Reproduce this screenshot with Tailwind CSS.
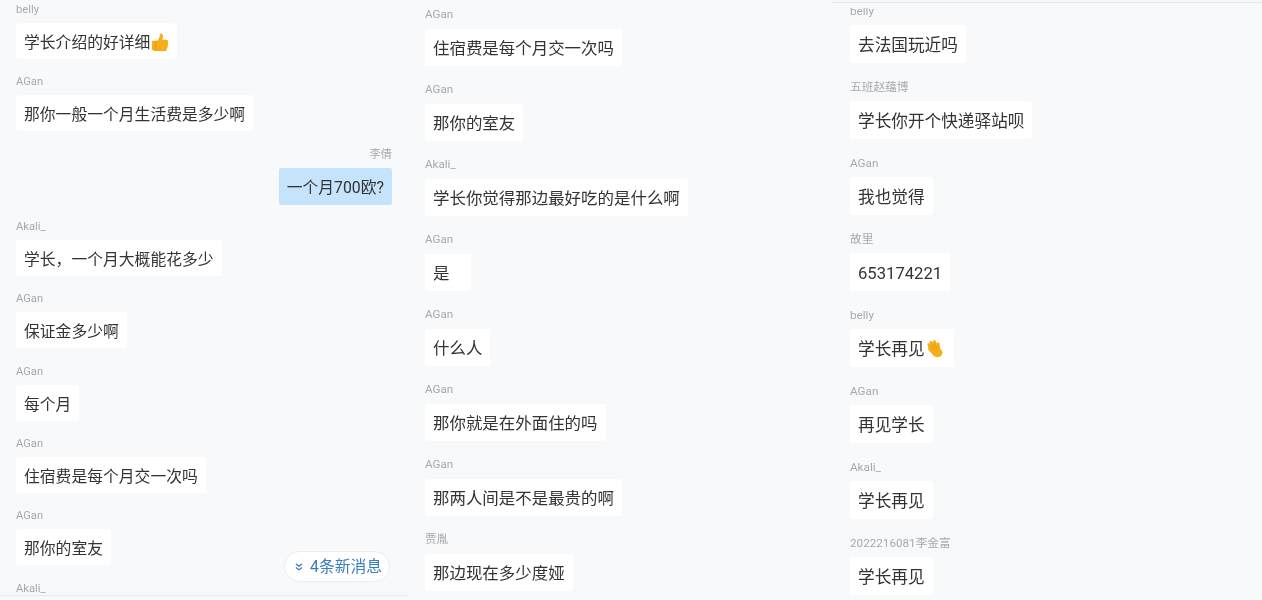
<!DOCTYPE html>
<html lang="zh-CN">
<head>
<meta charset="utf-8">
<script src="https://cdn.jsdelivr.net/npm/@tailwindcss/browser@4"></script>
</head>
<body class="m-0">
<main class="relative flex h-[600px] w-[1262px] overflow-hidden bg-[#f7f9fb] font-['Roboto','Noto_Sans_CJK_SC',sans-serif] text-[#333] antialiased blur-[0.35px]">

  <!-- Column 1 -->
  <section class="w-[408px] shrink-0">
    <div class="h-[595px] overflow-hidden">
      <div class="flex flex-col gap-[14.33px] px-4 pt-[1px] text-[15.8px] leading-[33px]">
        <div><p class="mb-[5px] h-[17px] text-[11.2px] leading-[18px] text-[#a9a9a9]">belly</p><p class="flex w-fit rounded-[2px] bg-white px-2 pt-[3px]">学长介绍的好详细<svg class="ml-[1px] mt-[6px] h-[20px] w-[18px]" viewBox="0 0 20 21"><path fill="#f5ae17" d="M1 10.500c0-.8.6-1.400 1.400-1.400H7c1.200-1.200 2.200-3 2.600-5.200.2-1.400.5-2.900 1.700-2.900 1.400 0 2.100 1.500 2.100 3.200 0 1.400-.4 2.800-1 3.900h4.700c1.100 0 1.900.9 1.900 2 0 .6-.3 1.100-.6 1.500.5.4.8 1 .8 1.600 0 .8-.4 1.400-1 1.800.2.3.3.7.3 1.100 0 .8-.5 1.500-1.100 1.800.1.3.1.5.1.8 0 1.100-.9 1.800-2 1.800H6c-2 0-5-.4-5-2.500z"/><path fill="#e39410" d="M6 10v9.500l-1 .2V9.800z"/></svg></p></div>
        <div><p class="mb-[5px] h-[17px] text-[11.2px] leading-[18px] text-[#a9a9a9]">AGan</p><p class="w-fit rounded-[2px] bg-white px-2 pt-[3px]">那你一般一个月生活费是多少啊</p></div>
        <div class="flex flex-col items-end"><p class="mb-[5px] h-[17px] text-[11.2px] leading-[18px] text-[#a9a9a9]">李倩</p><p class="w-fit rounded-[2px] bg-[#c5e3fb] px-2 pt-[3px] leading-[34px]">一个月700欧?</p></div>
        <div class="-mt-[1px]"><p class="mb-[5px] h-[17px] text-[11.2px] leading-[18px] text-[#a9a9a9]">Akali_</p><p class="w-fit rounded-[2px] bg-white px-2 pt-[3px]">学长，一个月大概能花多少</p></div>
        <div><p class="mb-[5px] h-[17px] text-[11.2px] leading-[18px] text-[#a9a9a9]">AGan</p><p class="w-fit rounded-[2px] bg-white px-2 pt-[3px]">保证金多少啊</p></div>
        <div><p class="mb-[5px] h-[17px] text-[11.2px] leading-[18px] text-[#a9a9a9]">AGan</p><p class="w-fit rounded-[2px] bg-white px-2 pt-[3px]">每个月</p></div>
        <div><p class="mb-[5px] h-[17px] text-[11.2px] leading-[18px] text-[#a9a9a9]">AGan</p><p class="w-fit rounded-[2px] bg-white px-2 pt-[3px]">住宿费是每个月交一次吗</p></div>
        <div><p class="mb-[5px] h-[17px] text-[11.2px] leading-[18px] text-[#a9a9a9]">AGan</p><p class="w-fit rounded-[2px] bg-white px-2 pt-[3px]">那你的室友</p></div>
        <div><p class="mb-[5px] h-[17px] text-[11.2px] leading-[18px] text-[#a9a9a9]">Akali_</p></div>
      </div>
    </div>
    <div class="h-px bg-[#e6e9ec]"></div>
  </section>

  <!-- Column 2 -->
  <section class="w-[424px] shrink-0 overflow-hidden pl-[17px] pt-[6px]">
    <div class="flex flex-col gap-[15px] text-[16.47px] leading-[35px]">
      <div><p class="mb-[7px] h-4 text-[11.6px] leading-4 text-[#a9a9a9]">AGan</p><p class="w-fit rounded-[2px] bg-white px-2 pt-[2px]">住宿费是每个月交一次吗</p></div>
      <div><p class="mb-[7px] h-4 text-[11.6px] leading-4 text-[#a9a9a9]">AGan</p><p class="w-fit rounded-[2px] bg-white px-2 pt-[2px]">那你的室友</p></div>
      <div><p class="mb-[7px] h-4 text-[11.6px] leading-4 text-[#a9a9a9]">Akali_</p><p class="w-fit rounded-[2px] bg-white px-2 pt-[2px]">学长你觉得那边最好吃的是什么啊</p></div>
      <div><p class="mb-[7px] h-4 text-[11.6px] leading-4 text-[#a9a9a9]">AGan</p><p class="w-fit rounded-[2px] bg-white pl-2 pr-[22px] pt-[2px]">是</p></div>
      <div><p class="mb-[7px] h-4 text-[11.6px] leading-4 text-[#a9a9a9]">AGan</p><p class="w-fit rounded-[2px] bg-white px-2 pt-[2px]">什么人</p></div>
      <div><p class="mb-[7px] h-4 text-[11.6px] leading-4 text-[#a9a9a9]">AGan</p><p class="w-fit rounded-[2px] bg-white px-2 pt-[2px]">那你就是在外面住的吗</p></div>
      <div><p class="mb-[7px] h-4 text-[11.6px] leading-4 text-[#a9a9a9]">AGan</p><p class="w-fit rounded-[2px] bg-white px-2 pt-[2px]">那两人间是不是最贵的啊</p></div>
      <div><p class="mb-[7px] h-4 text-[11.6px] leading-4 text-[#a9a9a9]">贾胤</p><p class="w-fit rounded-[2px] bg-white px-2 pt-[2px]">那边现在多少度娅</p></div>
    </div>
  </section>

  <!-- Column 3 -->
  <section class="flex min-w-0 flex-1 flex-col">
    <div class="mt-[2px] h-px shrink-0 bg-[#e6e9ec]"></div>
    <div class="mt-[5px] min-h-0 flex-1 overflow-hidden pl-[18px]">
      <div class="-mt-[5px] flex flex-col gap-[16px] text-[16.65px] leading-[34px]">
        <div><p class="mb-[6px] h-4 text-[11.7px] leading-4 text-[#a9a9a9]">belly</p><p class="w-fit rounded-[2px] bg-white px-2 pt-[4px]">去法国玩近吗</p></div>
        <div><p class="mb-[6px] h-4 text-[11.7px] leading-4 text-[#a9a9a9]">五班赵蕴博</p><p class="w-fit rounded-[2px] bg-white px-2 pt-[4px]">学长你开个快递驿站呗</p></div>
        <div><p class="mb-[6px] h-4 text-[11.7px] leading-4 text-[#a9a9a9]">AGan</p><p class="w-fit rounded-[2px] bg-white px-2 pt-[4px]">我也觉得</p></div>
        <div><p class="mb-[6px] h-4 text-[11.7px] leading-4 text-[#a9a9a9]">故里</p><p class="w-fit rounded-[2px] bg-white px-2 pt-[4px]">653174221</p></div>
        <div><p class="mb-[6px] h-4 text-[11.7px] leading-4 text-[#a9a9a9]">belly</p><p class="flex w-fit rounded-[2px] bg-white pl-2 pr-[10px] pt-[4px]">学长再见<svg class="ml-[2.500px] mt-[6.500px] h-[18px] w-[17px]" viewBox="0 0 17 18"><path fill="#f5ae17" d="M.6 3.600c.4-.6 1.200-.6 1.800-.1l.5.4-.4-1.300C2.300 1.900 2.700 1.200 3.400 1c.7-.2 1.200.2 1.500.8l.5 1c.1-1 .5-2.200 1.500-2.500 1-.3 1.700.4 2 1.100l1 2.200c.2-.7.800-1.300 1.600-1.100.8.200 1.100.9 1.100 1.700l.4 3.600c.1.600.4 1.100.8 1.500 1 1 1.600 2.300 1.600 3.500 0 2.600-2.100 4.400-4.700 4.400-2.200 0-3.900-1-5.200-2.700L1.300 9.400c-.5-.7-.4-1.500.2-1.900l.2-.2-1-1.600c-.3-.6-.4-1.500-.1-2.100z"/><path fill="#e39410" d="M4.600 5l3.300 4.100-.6.400L4 5.400zM7.400 3.400l2.600 4.900-.7.300-2.500-4.900z"/></svg></p></div>
        <div><p class="mb-[6px] h-4 text-[11.7px] leading-4 text-[#a9a9a9]">AGan</p><p class="w-fit rounded-[2px] bg-white px-2 pt-[4px]">再见学长</p></div>
        <div><p class="mb-[6px] h-4 text-[11.7px] leading-4 text-[#a9a9a9]">Akali_</p><p class="w-fit rounded-[2px] bg-white px-2 pt-[4px]">学长再见</p></div>
        <div><p class="mb-[6px] h-4 text-[11.7px] leading-4 text-[#a9a9a9]">2022216081李金富</p><p class="w-fit rounded-[2px] bg-white px-2 pt-[4px]">学长再见</p></div>
      </div>
    </div>
  </section>

  <!-- New messages pill -->
  <div class="absolute left-[284px] top-[551px] flex h-[31px] w-[106px] items-center gap-[7px] rounded-full border border-[#e9edf1] bg-white pl-[10px] text-[15.8px] leading-none text-[#3a7dbd]">
    <svg class="h-[8px] w-[8px]" viewBox="0 0 9 9" fill="none" stroke="#3a7dbd" stroke-width="1.400"><path d="M1 1l3.500 2.500L8 1M1 5l3.500 2.500L8 5"/></svg>
    <span class="pt-[1px]">4条新消息</span>
  </div>
</main>
</body>
</html>
